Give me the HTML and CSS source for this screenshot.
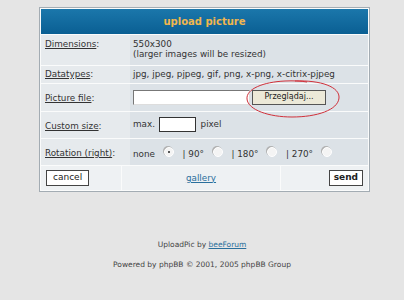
FILE: index.html
```html
<!DOCTYPE html>
<html lang="pl">
<head>
  <meta charset="UTF-8" />
  <title>upload picture</title>
  <link rel="stylesheet" href="styles.css">
</head>
<body>
  <form class="upload">
    <table class="forumline">
      <tr class="row-head">
        <th colspan="3">upload picture</th>
      </tr>
      <tr class="row-dim">
        <td class="label"><span class="u">Dimensions</span>:</td>
        <td class="value" colspan="2">550x300<br>(larger images will be resized)</td>
      </tr>
      <tr class="row-types">
        <td class="label"><span class="u">Datatypes</span>:</td>
        <td class="value" colspan="2">jpg, jpeg, pjpeg, gif, png, x-png, x-citrix-pjpeg</td>
      </tr>
      <tr class="row-file">
        <td class="label"><span class="u">Picture file</span>:</td>
        <td class="value" colspan="2">
          <div class="file">
            <span class="file-box"></span>
            <span class="file-btn">Przeglądaj...</span>
            <svg class="circle" width="100" height="42" viewBox="0 0 100 42">
              <path d="M52 3 C78 2 97 9 96 20 C95 32 74 39 49 39 C26 39 5 32 4 21 C3 11 20 4 42 3 C50 2.6 58 3 64 4" fill="none" stroke="#d0303a" stroke-width="1"/>
            </svg>
          </div>
        </td>
      </tr>
      <tr class="row-size">
        <td class="label"><span class="u">Custom size</span>:</td>
        <td class="value" colspan="2">max. <span class="size-box"></span> pixel</td>
      </tr>
      <tr class="row-rot">
        <td class="label"><span class="u">Rotation (right)</span>:</td>
        <td class="value" colspan="2">
          none <span class="radio on"></span> | 90° <span class="radio"></span> | 180° <span class="radio"></span> | 270° <span class="radio"></span>
        </td>
      </tr>
    </table>
    <table class="forumline foot">
      <tr class="row-foot">
        <td class="c-cancel"><span class="btn">cancel</span></td>
        <td class="c-gallery"><a href="#">gallery</a></td>
        <td class="c-send"><span class="btn strong">send</span></td>
      </tr>
    </table>
  </form>

  <div class="copyright">
    <p>UploadPic by <a href="#">beeForum</a></p>
    <p>Powered by phpBB &copy; 2001, 2005 phpBB Group</p>
  </div>
</body>
</html>
```

FILE: styles.css
```css
html, body {
  margin: 0;
  padding: 0;
  background: #e5e5e5;
  color: #333;
  font-family: "DejaVu Sans", Verdana, sans-serif;
  font-size: 8.8px;
}

.upload {
  width: 331px;
  margin: 7px 0 0 39px;
  border: 1px solid #a3acb3;
  background: #fafbfb;
  padding: 1px;
  box-sizing: border-box;
}

.forumline {
  width: 100%;
  border-collapse: separate;
  border-spacing: 0 1px;
  margin: -1px 0 0;
}

.forumline.foot {
  border-spacing: 1px 0;
  margin: 0 -1px;
  width: calc(100% + 2px);
}

th {
  height: 25px;
  padding: 0;
  background: linear-gradient(#1b77ab, #0a5f93);
  color: #f0b64e;
  font-size: 10px;
  font-weight: bold;
  text-align: center;
}

td {
  padding: 0 0 0 4px;
  line-height: 11px;
}

.label {
  width: 85px;
  background: #e6eaed;
  vertical-align: top;
  padding-top: 4px;
}

.value {
  background: #dce2e7;
  vertical-align: top;
  padding-top: 4px;
  padding-left: 3px;
}

.u {
  text-decoration: underline;
}

.row-dim td { height: 26px; }
.row-dim .value { line-height: 10px; padding-top: 4px; }
.row-types td { height: 14px; padding-top: 3px; }
.row-file td { height: 18px; padding-top: 9px; }
.row-file .value { padding-top: 6px; height: 21px; }
.row-size td { height: 17px; padding-top: 9px; }
.row-size .value { padding-top: 5px; height: 21px; }
.row-rot td { height: 17px; padding-top: 9px; }
.row-rot .value { padding-top: 8px; height: 18px; }

.file {
  position: relative;
  display: flex;
  gap: 2px;
}

.file-box {
  width: 117px;
  height: 15px;
  background: #fff;
  border: 1px solid #777;
  border-right-color: #ddd;
  border-bottom-color: #ddd;
  box-sizing: border-box;
}

.file-btn {
  width: 74px;
  height: 15px;
  background: #ece9d8;
  border: 1px solid #555;
  box-sizing: border-box;
  text-align: center;
  line-height: 12px;
  color: #222;
  font-size: 8px;
}

.circle {
  position: absolute;
  left: 110px;
  top: -12px;
}

.size-box {
  display: inline-block;
  width: 37px;
  height: 15px;
  background: #fff;
  border: 1px solid #333;
  box-sizing: border-box;
  vertical-align: middle;
  margin: 0 2px 0 1px;
}

.radio {
  display: inline-block;
  width: 8px;
  height: 8px;
  border-radius: 50%;
  background: #f4f4f4;
  border: 1px solid #fff;
  box-shadow: -1px -1px 0 #b0b0b0;
  vertical-align: 0;
  margin: 0 6px 0 6px;
  position: relative;
}

.radio.on::after {
  content: "";
  position: absolute;
  left: 3px;
  top: 3px;
  width: 2px;
  height: 2px;
  border-radius: 50%;
  background: #222;
}

.row-foot td {
  height: 24px;
  background: #eef1f3;
  padding: 0;
  vertical-align: middle;
}

.c-cancel {
  width: 80px;
}

.c-gallery {
  text-align: center;
}

.c-send {
  width: 82px;
  text-align: right;
  padding-right: 5px !important;
}

.btn {
  display: inline-block;
  border: 1px solid #444;
  background: #fff;
  padding: 1px 6px 2px;
  font-size: 9px;
  color: #222;
}

.c-cancel .btn {
  margin-left: 5px;
}

.btn.strong {
  font-weight: bold;
  padding: 1px 4px 2px;
}

a {
  color: #2a6f9c;
  text-decoration: underline;
}

.copyright {
  text-align: center;
  font-size: 7.5px;
  color: #444;
  margin-top: 48px;
}

.copyright p {
  margin: 0 0 11px;
  line-height: 9px;
}
```
